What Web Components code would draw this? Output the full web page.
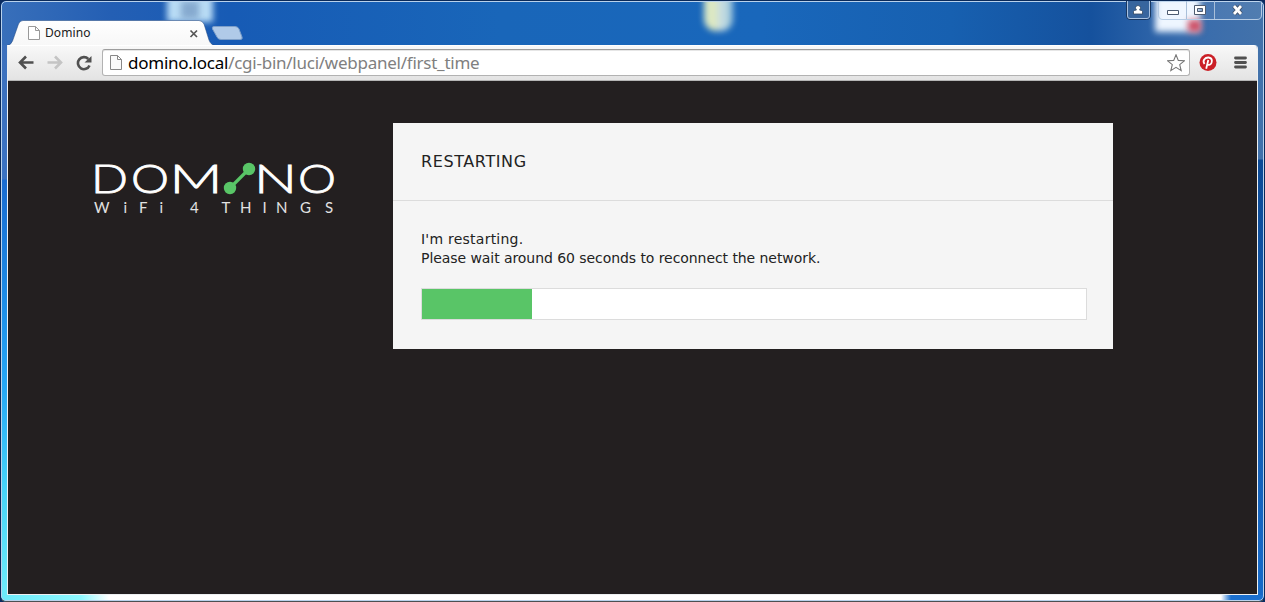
<!DOCTYPE html>
<html lang="en"><head><meta charset="utf-8"><title>Domino</title>
<style>html,body{margin:0;height:100%;overflow:hidden;background:#0a2b60}</style></head>
<body><desktop-window><browser-tab slot="tab">Domino</browser-tab><caption-buttons slot="caption"></caption-buttons>
<browser-toolbar slot="toolbar"><span slot="host">domino.local</span><span slot="path">/cgi-bin/luci/webpanel/first_time</span></browser-toolbar>
<domino-logo slot="logo"></domino-logo>
<status-panel slot="panel"><span slot="title">RESTARTING</span><span slot="line1">I'm restarting.</span><span slot="line2">Please wait around 60 seconds to reconnect the network.</span><progress-bar slot="bar" style="--value:110px"></progress-bar></status-panel>
</desktop-window>
<script>
const define=(name,html)=>customElements.define(name,class extends HTMLElement{constructor(){super();this.attachShadow({mode:'open'}).innerHTML=html}});

define('desktop-window',`<style>
:host{display:block;position:relative;box-sizing:border-box;width:1265px;height:602px;border:1px solid #0a2a5a;border-bottom-color:#4c5052;border-radius:6px;overflow:hidden;background:linear-gradient(90deg,#6ceafa 0,#8df8ff 80px,#fff 108px,#fff 1220px,#1b70cf 1230px) 0 594px/100% 8px no-repeat,linear-gradient(#4272ab 158px,#0d4a95 159px,#1769c6 560px) 100% 0/30px 100% no-repeat,linear-gradient(#3d70bb 0,#3a72c2 178px,#1a6bce 179px,#1d8ae6 290px,#27a9f6 390px,#47d4f8 490px,#6ceafa 590px)}
.sky{position:absolute;inset:0 0 auto;height:44px;background:linear-gradient(90deg,#386fba 0,#245fb4 110px,#175bb5 230px,#1966b9 500px,#1967bb 760px,#1760b0 950px,#15519d 1090px,#376bad 1180px,#4372aa 1263px)}
.blob{position:absolute;filter:blur(3px)}
.edge{position:absolute;inset:0;border:1px solid #b9d2ec;border-radius:5px;pointer-events:none}
.frame{position:relative;display:flex;flex-direction:column;height:594px;padding:0 6px;box-sizing:border-box}
.strip{height:44px;flex:none;display:flex;justify-content:space-between;box-sizing:border-box}
.client{flex:1;display:flex;flex-direction:column;border:1px solid #edf0f2;border-top:0;border-top-right-radius:4px;overflow:hidden;box-sizing:border-box}
main{flex:1;background:#231f20;display:flex;align-items:flex-start;padding:42px 0 0 76px}
.logo{width:309px;padding-top:24px}
</style><div class="sky"></div>
<div class="blob" style="left:166px;top:-6px;width:46px;height:27px;background:#b9dcf5"></div><div class="blob" style="left:180px;top:0;width:18px;height:18px;background:#86aacf"></div>
<div class="blob" style="left:703px;top:-6px;width:29px;height:36px;background:linear-gradient(90deg,#d9eacb,#dfe8bd 35%,#c6dce8 60%,#b5d4d8 80%,#8cbce0);border-radius:0 0 12px 12px"></div>
<div class="blob" style="left:1154px;top:-5px;width:45px;height:36px;background:#eef6ff"></div><div class="blob" style="left:1187px;top:19px;width:13px;height:12px;background:#cc4c63"></div>
<div class="edge"></div>
<div class="frame"><div class="strip"><slot name="tab"></slot><slot name="caption"></slot></div>
<div class="client"><slot name="toolbar"></slot><main><div class="logo"><slot name="logo"></slot></div><slot name="panel"></slot></main></div></div>`);

define('browser-tab',`<style>:host{display:grid;width:240px;height:26px;margin-top:19px;font:12px/24px "Noto Sans",sans-serif;color:#202020}
svg.bg,.row{grid-area:1/1}.row{display:flex;align-items:center;height:26px;padding-left:21px}.row slot{display:block}.t{margin-left:5px;width:144px;letter-spacing:.1px}</style>
<svg class="bg" width="240" height="26"><defs><linearGradient id="g" x2="0" y2="1"><stop stop-color="#fff"/><stop offset="1" stop-color="#f7f7f7"/></linearGradient></defs><path d="M0 26V25.500Q4 25 5.500 21L11.500 4Q13 .5 16 .5H192Q195 .5 197 4L202 20Q204 25.500 209 25.500V26Z" fill="url(#g)" stroke="#244a83" stroke-opacity=".55"/><path d="M207 6.500H228Q231 6.500 232 9L235 17Q236 19.500 233 19.500H214Q211 19.500 210 17L205.500 9Q204.500 6.500 207 6.500Z" fill="#b0cae8" stroke="#7d9fc9"/></svg>
<div class="row"><svg width="12" height="15" fill="#fff" stroke="#999"><path d="M.5.5H7.500L11.500 4.500V13.500H.5ZM7.500.5V4.500H11.500"/></svg><span class="t"><slot></slot></span><svg width="9" height="9" stroke="#555" stroke-width="1.700"><path d="M1.500 1.500L8 8M8 1.500L1.500 8"/></svg></div>`);

define('caption-buttons',`<style>:host{display:flex;gap:7px;margin-right:-4px}svg{display:block}</style>
<svg width="25" height="20"><path d="M.5 0V15Q.5 18.500 4 18.500H20.500Q24.500 18.500 24.500 15V0" fill="#37659e" stroke="#183761"/><path d="M1.500 0V15Q1.500 17.500 4 17.500H21Q23.500 17.500 23.500 15V0" fill="none" stroke="#a8c2e2"/><path d="M7.500 13V10.500Q8 9 10.500 9Q9.500 8 9.500 6.500Q10 4.500 12 4.500Q14 4.500 14.500 6.500Q14.500 8 13.500 9Q16 9 16.500 10.500V13Z" fill="#fff" stroke="#33475f" stroke-width=".8"/></svg>
<svg width="104" height="20"><path d="M.5 0V14Q.5 18.500 5 18.500H99Q103.500 18.500 103.500 14V0" fill="#fff" fill-opacity=".08" stroke="#b5cbe4"/><path d="M28.500 0V18M56.500 0V18" stroke="#a9bfd9"/><g fill="#fff" stroke="#4d5b70"><path d="M9.500 9.500H20.500V13.500H9.500Z"/><path d="M36.500 4.500H47.500V13.500H36.500ZM39.500 7.500H44.500V10.500H39.500Z" fill-rule="evenodd"/></g><path d="M76 5L83 13M83 5L76 13" stroke="#43536b" stroke-width="4.500"/><path d="M76 5L83 13M83 5L76 13" stroke="#fff" stroke-width="2.700"/></svg>`);

define('browser-toolbar',`<style>:host{display:flex;align-items:center;box-sizing:border-box;height:36px;padding:0 8px 1px 10px;border-top:1px solid #fff;border-bottom:1px solid #b5b5b5;background:linear-gradient(#f8f8f8,#e3e3e3);font:17px/24px "Noto Sans",sans-serif}
svg{display:block;flex:none}.nav{display:flex;gap:13px;width:84px}.url{display:flex;align-items:center;width:1086px;height:25px;border:1px solid #b2b2b2;border-top-color:#9d9d9d;border-radius:3px;background:#fff;box-shadow:inset 0 1px #e6e6e6}
.text{flex:1;margin-left:6px;white-space:nowrap;letter-spacing:-.25px}.h{color:#000}.p{color:#808080}.pin{margin:0 17px 0 9px}</style>
<div class="nav"><svg width="16" height="16" fill="none" stroke="#505050" stroke-width="2.600"><path d="M15.500 7.500H2M8 1.500L2 7.500L8 13.500"/></svg><svg width="16" height="16" fill="none" stroke="#c4c4c4" stroke-width="2.600"><path d="M.5 7.500H14M8 1.500L14 7.500L8 13.500"/></svg><svg width="16" height="16"><path d="M12.300 4A6 6 0 1 0 13.500 10.500" fill="none" stroke="#505050" stroke-width="2.600"/><path d="M15.500 1V7.500H8.500Z" fill="#505050"/></svg></div>
<div class="url"><svg width="12" height="16" style="margin-left:7px" fill="#fafafa" stroke="#888"><path d="M.5 .5H7.500L11.500 4.500V14.500H.5ZM7.500 .5V4.500H11.500"/></svg><span class="text"><span class="h"><slot name="host"></slot></span><span class="p"><slot name="path"></slot></span></span><svg width="18" height="18" style="margin-right:4px" fill="#fff" stroke="#777" stroke-width="1.100"><path d="M9 .8L11.300 6.400L17.300 6.800L12.700 10.700L14.200 16.600L9 13.400L3.800 16.600L5.300 10.700L.7 6.800L6.700 6.400Z"/></svg></div>
<svg class="pin" width="18" height="18"><circle cx="9" cy="8.500" r="8.500" fill="#cb2027"/><path d="M5.500 10Q3.800 7.700 5.200 5.500Q6.800 3.300 9.600 3.500Q12.800 3.800 12.900 6.800Q12.600 10.700 10 10.900Q8.700 10.900 8.300 9.800M9.300 6L7.200 14.700" fill="none" stroke="#fff" stroke-width="1.800"/></svg>
<svg width="13" height="14" stroke="#505050" stroke-width="2.800" stroke-linecap="round"><path d="M1.500 2H11.500M1.500 6.500H11.500M1.500 11H11.500"/></svg>`);

define('domino-logo',`<style>:host{display:block}svg{display:block}text{fill:#fff}.w{font:300 39px Lato,sans-serif;stroke:#fff;stroke-width:.8}.s{font:400 15px Lato,sans-serif;fill:#e2e2e2}</style>
<svg width="266" height="80" viewBox="-8 -12 266 80"><g class="w"><text x="-1" y="34" textLength="37" lengthAdjust="spacingAndGlyphs">D</text><text x="39" y="34" textLength="38" lengthAdjust="spacingAndGlyphs">O</text><text x="77.500" y="34" textLength="53" lengthAdjust="spacingAndGlyphs">M</text><text x="162" y="34" textLength="43" lengthAdjust="spacingAndGlyphs">N</text><text x="206" y="34" textLength="38" lengthAdjust="spacingAndGlyphs">O</text></g>
<path d="M138 29L157 10" stroke="#59c567" stroke-width="3.200"/><circle cx="138" cy="29" r="6.200" fill="#59c567"/><circle cx="157" cy="10" r="6.200" fill="#59c567"/>
<text class="s" y="54" x="2 31.500 47 67.500 98 129.500 148 170.500 184 208 233">WiFi4THINGS</text></svg>`);

define('status-panel',`<style>:host{display:block;width:720px;height:226px;background:#f5f5f5;font:14px/19px "DejaVu Sans",Verdana,sans-serif;color:#222}
header{box-sizing:border-box;padding:28px 28px 0;font-size:16px;line-height:22px;letter-spacing:.6px;border-bottom:1px solid #dcdcdc;height:78px}.body{padding:29px 26px 28px 28px}.a{letter-spacing:.24px}.b{margin-bottom:20px;white-space:nowrap;letter-spacing:-.065px}</style>
<header><slot name="title"></slot></header><div class="body"><div class="a"><slot name="line1"></slot></div><div class="b"><slot name="line2"></slot></div><slot name="bar"></slot></div>`);

define('progress-bar',`<style>:host{display:block;height:30px;border:1px solid #dcdcdc;background:#fff}div{height:100%;width:var(--value);background:#59c567}</style><div></div>`);
</script></body></html>
